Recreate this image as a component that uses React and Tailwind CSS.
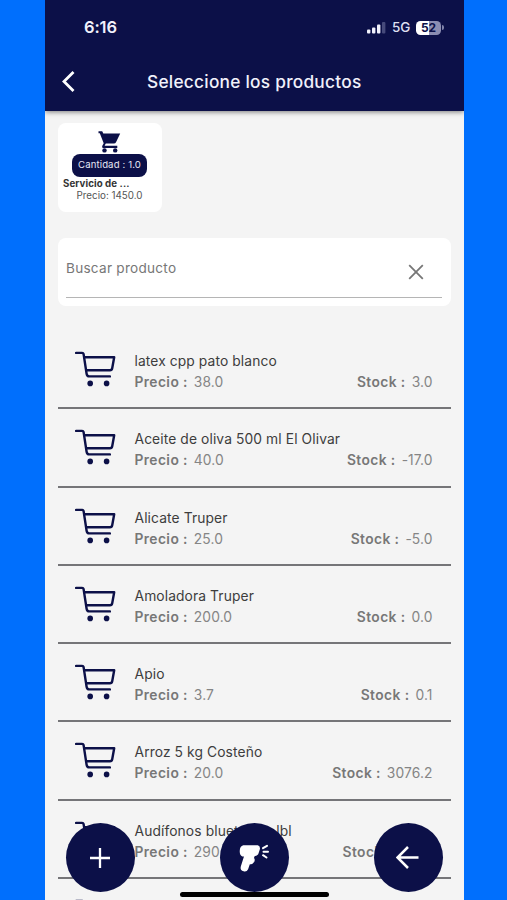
const products = [
  { name: "latex cpp pato blanco", price: "38.0", stock: "3.0" },
  { name: "Aceite de oliva 500 ml El Olivar", price: "40.0", stock: "-17.0" },
  { name: "Alicate Truper", price: "25.0", stock: "-5.0" },
  { name: "Amoladora Truper", price: "200.0", stock: "0.0" },
  { name: "Apio", price: "3.7", stock: "0.1" },
  { name: "Arroz 5 kg Costeño", price: "20.0", stock: "3076.2" },
  { name: "Audífonos bluetooth\u00a0 lbl", price: "290.0", stock: "120.0" },
];

function CartOutline() {
  return (
    <svg className="h-[38px] w-[42px] shrink-0" viewBox="0.5 0 42 38" fill="none" stroke="#0c1048" strokeWidth="2.4" strokeLinecap="round" strokeLinejoin="round">
      <path d="M1.6 1.9H7.6Q8.8 1.9 9.1 3.1L12.1 22.8Q12.5 25.4 14.8 25.4H35.4" />
      <path d="M9.8 6.2H39.7L37.7 17.2Q37.4 19.2 35.4 19.2H11.9" />
      <circle cx="15.7" cy="32.4" r="2.8" fill="#0c1048" stroke="none" />
      <circle cx="32.1" cy="32.4" r="2.8" fill="#0c1048" stroke="none" />
    </svg>
  );
}

function StatusBar() {
  return (
    <div className="flex h-[55px] items-center justify-between pr-[20px] pl-[39px]">
      <span className="text-[16.5px] font-semibold tracking-[-0.1px]">6:16</span>
      <div className="flex items-center">
        <svg className="mr-px h-3 w-[19px]" viewBox="0 0 19 12" fill="#f1f1fb">
          <rect x="0" y="7.5" width="3.4" height="4" rx="1" />
          <rect x="5" y="5.5" width="3.4" height="6" rx="1" />
          <rect x="10" y="2.5" width="3.4" height="9" rx="1" />
          <rect x="15" y="0" width="3.4" height="11.5" rx="1" fill="#464a7b" />
        </svg>
        <span className="ml-[5px] w-[24px] text-[13.5px] font-medium tracking-[-0.2px] text-[#dedff0]">5G</span>
        <div className="flex h-[14px] w-[25px] items-center justify-center rounded-[4.5px] bg-[linear-gradient(90deg,#fff_52%,#8b8db2_52%)] text-[12px] leading-none font-bold text-[#0c1048]">
          52
        </div>
        <div className="ml-px h-[5px] w-[1.5px] rounded-r bg-[#8084ab]" />
      </div>
    </div>
  );
}

function SelectedCard() {
  return (
    <div className="mt-[12.5px] ml-[12.5px] flex h-[89px] w-[104px] shrink-0 flex-col items-center rounded-lg bg-white">
      <svg className="mt-[7px] h-6 w-[24px] shrink-0" viewBox="1 0 24 24" fill="#0c1048">
        <path d="M1.5 1.2H5.2L6.3 3.4H23.2L19 12.2Q18.4 13.6 16.9 13.6H8.8L7.6 15.8H20.3V18H6.2Q4.6 17.6 5.2 15.9L6.7 13.2L2.8 3.2H1.5Z" />
        <circle cx="7.5" cy="20.4" r="2.2" />
        <circle cx="18.2" cy="20.4" r="2.2" />
      </svg>
      <div className="flex h-[23px] w-[75px] shrink-0 items-center justify-center rounded-[8px] bg-[#0c1048] text-[9.6px] tracking-[0.12px] whitespace-nowrap text-[#e7e8f6]">
        Cantidad : 1.0
      </div>
      <div className="mt-[0.5px] w-full pl-[5.5px] text-[9.7px] leading-[12px] font-bold tracking-[0.1px] text-[#333]">Servicio de ...</div>
      <div className="text-[9.8px] leading-[12px] text-[#555]">Precio: 1450.0</div>
    </div>
  );
}

function SearchField() {
  return (
    <div className="mr-[13px] ml-[12.5px] mt-[26px] h-[68px] shrink-0 rounded-lg bg-white pr-[9px] pl-[8.5px]">
      <div className="flex h-[60px] items-center justify-between border-b border-[#b5b5b5] pr-[18px]">
        <span className="mt-[2px] text-[13.6px] tracking-[0.25px] text-[#777]">Buscar producto</span>
        <svg className="mt-[8px] h-4 w-4" viewBox="0 0 16 16" stroke="#777" strokeWidth="1.8">
          <path d="M1.2 1.2L14.8 14.8M14.8 1.2L1.2 14.8" />
        </svg>
      </div>
    </div>
  );
}

function ProductRow({ name, price, stock }) {
  return (
    <div className="flex h-[78.3px] shrink-0 flex-col">
      <div className="flex flex-1 pt-[20px] pr-[18px] pl-[17.5px]">
        <CartOutline />
        <div className="ml-[17.5px] flex-1 whitespace-nowrap">
          <div className="text-[13.8px] leading-[21px] tracking-[0.11px] text-[#3d3d3d]">{name}</div>
          <div className="flex justify-between text-[13.8px] leading-[21.5px] tracking-[0.1px] text-[#858585]">
            <span><b className="mr-[6px] font-semibold tracking-[0.4px] text-[#777]">Precio :</b>{price}</span>
            <span><b className="mr-[6px] font-semibold tracking-[0.4px] text-[#777]">Stock :</b>{stock}</span>
          </div>
        </div>
      </div>
      <div className="h-[2px] bg-[#757578]" />
    </div>
  );
}

const roundButton = "flex size-[69px] items-center justify-center rounded-full bg-[#0c1048]";

export default function App() {
  return (
    <div className="h-[900px] w-[507px] overflow-hidden bg-[#006ffd] pl-[45px] font-['Inter','Liberation_Sans',sans-serif]">
      <div className="relative flex h-full w-[418.5px] flex-col overflow-hidden bg-[#f4f4f4]">
        <header className="h-[110.5px] shrink-0 bg-[#0c1048] text-[#f1f1fb] shadow-[0_1px_5px_rgba(0,0,0,0.5)]">
          <StatusBar />
          <div className="relative flex h-[53px] items-center justify-center">
            <svg className="absolute top-[16px] left-[16px] h-[21px] w-[15px]" viewBox="0 0 15 21" fill="none" stroke="#fff" strokeWidth="2.8">
              <path d="M12.5 1L3 10.5L12.5 20" />
            </svg>
            <h1 className="text-[17.3px] font-medium tracking-[0.25px]">Seleccione los productos</h1>
          </div>
        </header>
        <SelectedCard />
        <SearchField />
        <main className="mr-[13px] ml-[12.5px] mt-[25px] flex flex-col">
          {products.map((product) => <ProductRow key={product.name} {...product} />)}
          <div className="pt-[20px] pl-[17.5px]"><CartOutline /></div>
        </main>
        <div className="absolute bottom-[3px] left-[135px] z-20 h-[5px] w-[149px] rounded-full bg-black" />
        <div className="absolute inset-x-[21px] bottom-[8px] z-10 flex justify-between">
          <button className={roundButton} aria-label="Agregar">
            <svg className="mr-[2px] size-5" viewBox="0 0 20 20" stroke="#fff" strokeWidth="2.3"><path d="M0 10H20M10 0V20" /></svg>
          </button>
          <button className={roundButton} aria-label="Escanear">
            <svg className="h-[28px] w-[30px]" viewBox="-0.5 0 30 28" fill="#fff" stroke="#fff" strokeLinecap="round" strokeLinejoin="round">
              <path strokeWidth="1.5" d="M4 2H18Q20.3 2.8 19.5 5.5L18 10Q17.4 11.2 14.7 11.4L13.5 14.2Q15 15 14.2 17.3Q13 19.6 9.7 19.8L7.9 25Q6.8 27.3 4.3 26.6Q1.3 26 2 22.8L5.5 11.8H3.2Q.8 10.7 1 6.8Q1.1 2.8 4 2Z" />
              <path strokeWidth="2" fill="none" d="M23.5 4.2L27.5 1.8M24 7.8H28.5M23.5 11.2L27 13.5" />
            </svg>
          </button>
          <button className={roundButton} aria-label="Volver">
            <svg className="mr-[2px] h-[23px] w-[23px]" viewBox="0 0 23 23" fill="none" stroke="#fff" strokeWidth="2.5"><path d="M22.5 11.5H1.8M12 1L1.5 11.5L12 22" /></svg>
          </button>
        </div>
      </div>
    </div>
  );
}
